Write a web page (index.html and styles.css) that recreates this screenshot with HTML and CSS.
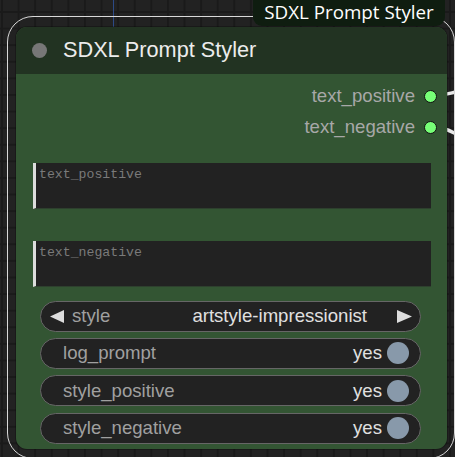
FILE: index.html
```html
<!DOCTYPE html>
<html>
<head>
<meta charset="utf-8">
<link rel="stylesheet" href="styles.css">
</head>
<body>
<div class="canvas">
  <div class="guide"></div>
  <svg class="wires" width="455" height="457" viewBox="0 0 455 457">
    <path d="M430 96 C 445 96, 450 93, 460 91" />
    <path d="M430 127 C 445 127, 450 131, 462 137" />
  </svg>
  <div class="selection"></div>
  <div class="node">
    <div class="title">
      <span class="title-dot"></span>
      <span class="title-text">SDXL Prompt Styler</span>
    </div>
    <div class="body">
      <div class="outputs">
        <div class="out-row"><span class="out-label">text_positive</span><span class="out-dot"></span></div>
        <div class="out-row"><span class="out-label">text_negative</span><span class="out-dot"></span></div>
      </div>
      <div class="textbox first"><span class="ph">text_positive</span></div>
      <div class="textbox second"><span class="ph">text_negative</span></div>
      <div class="widgets">
        <div class="pill combo">
          <svg class="arrow" width="14" height="13" viewBox="0 0 14 13"><polygon points="14,0 14,13 0,6.5"/></svg>
          <span class="w-label">style</span>
          <span class="w-value">artstyle-impressionist</span>
          <svg class="arrow right" width="15" height="13" viewBox="0 0 15 13"><polygon points="0,0 0,13 15,6.5"/></svg>
        </div>
        <div class="pill toggle">
          <span class="w-label">log_prompt</span>
          <span class="w-yes">yes</span>
          <span class="knob"></span>
        </div>
        <div class="pill toggle">
          <span class="w-label">style_positive</span>
          <span class="w-yes">yes</span>
          <span class="knob"></span>
        </div>
        <div class="pill toggle">
          <span class="w-label">style_negative</span>
          <span class="w-yes">yes</span>
          <span class="knob"></span>
        </div>
      </div>
    </div>
  </div>
  <div class="badge">SDXL Prompt Styler</div>
</div>
</body>
</html>
```

FILE: styles.css
```css
* { box-sizing: border-box; }
html, body {
  margin: 0;
  padding: 0;
  background: #222;
  overflow: hidden;
}
.canvas {
  position: relative;
  width: 455px;
  height: 457px;
  overflow: hidden;
  background-color: #222;
  background-image:
    linear-gradient(to right, #1a1a1a 0 1.5px, transparent 1.5px),
    linear-gradient(to bottom, #1a1a1a 0 1.5px, transparent 1.5px);
  background-size: 16.6px 16.6px;
  background-position: 1px 11px;
  font-family: "Liberation Sans", Arial, sans-serif;
}
.guide {
  position: absolute;
  left: 112.5px;
  top: 0;
  width: 1px;
  height: 30px;
  background: #2c4a86;
}
.wires {
  position: absolute;
  left: 0;
  top: 0;
}
.wires path {
  fill: none;
  stroke: #e8e8e8;
  stroke-width: 3.5;
}
.selection {
  position: absolute;
  left: 7px;
  top: 16px;
  width: 448px;
  height: 443px;
  border: 1.8px solid #d8d8d8;
  border-radius: 26px;
}
.node {
  position: absolute;
  left: 16px;
  top: 27px;
  width: 430.7px;
  height: 422px;
  border-radius: 11px;
  background: #335533;
  overflow: hidden;
  display: flex;
  flex-direction: column;
  box-shadow: 0 0 0 1px rgba(0,0,0,0.25);
}
.title {
  height: 46.5px;
  background: #223322;
  display: flex;
  align-items: center;
  padding-left: 16px;
  gap: 16px;
  flex-shrink: 0;
}
.title-dot {
  width: 15px;
  height: 15px;
  border-radius: 50%;
  background: #777;
}
.title-text {
  color: #ececec;
  font-size: 21.7px;
}
.body {
  display: flex;
  flex-direction: column;
  padding-top: 7px;
}
.outputs {
  display: flex;
  flex-direction: column;
}
.out-row {
  height: 31px;
  display: flex;
  align-items: center;
  justify-content: flex-end;
  padding-right: 9.7px;
  gap: 9px;
}
.out-label {
  color: #a8a8a8;
  font-size: 18.6px;
}
.out-dot {
  width: 13px;
  height: 13px;
  border-radius: 50%;
  background: #7f7;
  border: 1.5px solid #111;
}
.textbox {
  height: 46px;
  margin-left: 17px;
  margin-right: 15.7px;
  background: #222;
  border-left: 3px solid #ddd;
  border-bottom: 1px solid #2e402e;
  padding: 4px 3px;
  font-family: "Liberation Mono", "DejaVu Sans Mono", monospace;
  font-size: 13.2px;
  color: #7a7a7a;
  line-height: 15px;
}
.textbox.first { margin-top: 20px; }
.textbox.second { margin-top: 32px; }
.widgets {
  margin-top: 14px;
  margin-left: 24px;
  margin-right: 25.7px;
  display: flex;
  flex-direction: column;
  gap: 6.4px;
}
.pill {
  height: 31px;
  border-radius: 16px;
  background: #222;
  border: 1px solid #666;
  display: flex;
  align-items: center;
  font-size: 18.6px;
}
.combo {
  padding-left: 9px;
  padding-right: 8px;
}
.arrow polygon { fill: #ddd; }
.combo .w-label {
  margin-left: 8px;
  color: #a0a0a0;
}
.combo .w-value {
  margin-left: auto;
  margin-right: 30px;
  color: #e0e0e0;
}
.toggle {
  padding-left: 22px;
  padding-right: 11px;
}
.toggle .w-label {
  color: #a0a0a0;
}
.w-yes {
  margin-left: auto;
  color: #e0e0e0;
  margin-right: 5px;
}
.knob {
  width: 22px;
  height: 22px;
  border-radius: 50%;
  background: #8899aa;
}
.badge {
  position: absolute;
  left: 253px;
  top: 0;
  width: 192px;
  height: 26px;
  background: #0f1d10;
  border-radius: 0 0 9px 9px;
  color: #fff;
  font-family: "Open Sans", "Noto Sans", sans-serif;
  font-size: 18.8px;
  line-height: 24px;
  text-align: center;
}
```
